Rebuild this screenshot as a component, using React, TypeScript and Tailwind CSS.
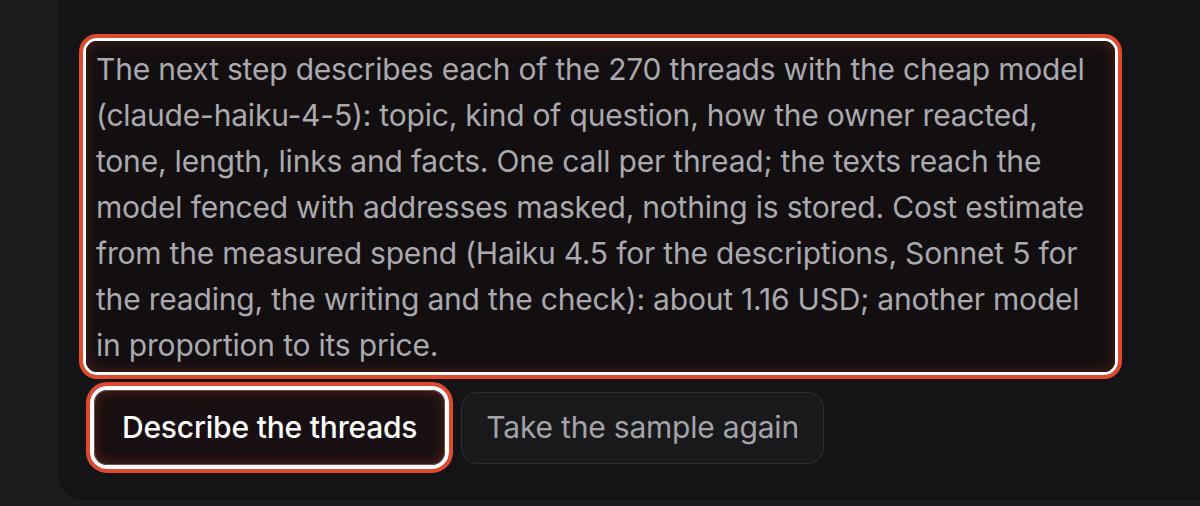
export default function App() {
  return (
    <div className="h-[506px] w-[1200px] overflow-hidden bg-[#1c1c1f] pl-[58px]" style={{ fontFamily: "Inter, 'Noto Sans', sans-serif" }}>
      <div className="h-[500px] rounded-bl-[24px] bg-[#141416] pl-[21px] pt-[34px]">
        {/* highlighted description */}
        <div className="w-[1043px] rounded-[18px] border-[4px] border-[#e04a2c]">
          <div className="rounded-[14px] border-[3px] border-white">
            <p className="rounded-[11px] bg-[#130f11] pl-[10px] pr-[6px] pb-[4px] pt-[5px] text-[30px] leading-[46px] tracking-[-0.2px] text-[#a9a9ae] shadow-[inset_0_0_14px_rgba(224,74,44,0.28)]">
              The next step describes each of the 270 threads with the cheap model (claude-haiku-4-5): topic, kind of
              question, how the owner reacted, tone, length, links and facts. One call per thread; the texts reach the
              model fenced with addresses masked, nothing is stored. Cost estimate from the measured spend (Haiku 4.5
              for the descriptions, Sonnet 5 for the reading, the writing and the check): about 1.16 USD; another model
              in proportion to its price.
            </p>
          </div>
        </div>

        <div className="mt-[3px] flex items-center gap-[8px] pl-[7px]">
          <div className="rounded-[21px] border-[4px] border-[#e04a2c]">
            <div className="rounded-[17px] border-[4px] border-white">
              <button className="h-[75px] rounded-[13px] border border-[#6a5452] bg-[#170f11] px-[27px] text-[30px] font-medium tracking-[-0.2px] text-white shadow-[inset_0_0_14px_rgba(224,74,44,0.3)]">
                Describe the threads
              </button>
            </div>
          </div>
          <button className="h-[72px] rounded-[16px] border border-[#2d2d32] bg-[#19191c] px-[24px] text-[30px] tracking-[-0.2px] text-[#a3a3a9]">
            Take the sample again
          </button>
        </div>
      </div>
    </div>
  );
}
